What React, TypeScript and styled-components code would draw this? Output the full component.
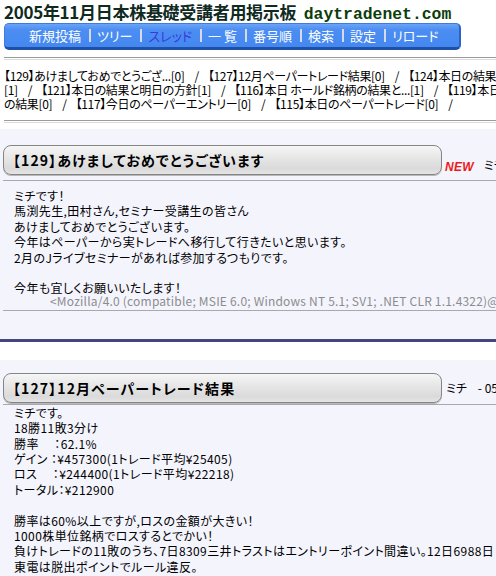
import React from "react";
import styled, { createGlobalStyle } from "styled-components";

// --- data ----------------------------------------

const navItems = [
  { label: "新規投稿" },
  { label: "ツリー" },
  { label: "スレッド", current: true },
  { label: "一 覧" },
  { label: "番号順" },
  { label: "検索" },
  { label: "設定" },
  { label: "リロード" },
];

// thread index, already broken into the lines the page wraps to
const threadLines = [
  ["【129】あけましておめでとうござ...[0]", "【127】12月ペーパートレード結果[0]", "【124】本日の結果"],
  ["[1]", "【121】本日の結果と明日の方針[1]", "【116】本日 ホールド銘柄の結果と...[1]", "【119】本日"],
  ["の結果[0]", "【117】今日のペーパーエントリー[0]", "【115】本日のペーパートレード[0]", ""],
];

const posts = [
  {
    title: "【129】あけましておめでとうございます",
    isNew: true,
    author: "ミチ",
    date: "- 06/01/02(月) 21:40",
    body: [
      "ミチです！",
      "馬渕先生,田村さん,セミナー受講生の皆さん",
      "あけましておめでとうございます。",
      "今年はペーパーから実トレードへ移行して行きたいと思います。",
      "2月のJライブセミナーがあれば参加するつもりです。",
      "",
      "今年も宜しくお願いいたします！",
    ],
    agent:
      "<Mozilla/4.0 (compatible; MSIE 6.0; Windows NT 5.1; SV1; .NET CLR 1.1.4322)@",
  },
  {
    title: "【127】12月ペーパートレード結果",
    isNew: false,
    author: "ミチ",
    date: "- 05/12/31(土) 18:12",
    body: [
      "ミチです。",
      "18勝11敗3分け",
      "勝率　 ：62.1%",
      "ゲイン ：¥457300(1トレード平均¥25405)",
      "ロス　 ：¥244400(1トレード平均¥22218)",
      "トータル：¥212900",
      "",
      "勝率は60%以上ですが,ロスの金額が大きい！",
      "1000株単位銘柄でロスするとでかい！",
      "負けトレードの11敗のうち、7日8309三井トラストはエントリーポイント間違い。12日6988日",
      "東電は脱出ポイントでルール違反。",
    ],
    agent: "",
  },
];

// --- component ----------------------------------------

export default function App() {
  return (
    <Page>
      <GlobalStyle />
      <Header>
        <Title>
          2005年11月日本株基礎受講者用掲示板 <Domain>daytradenet.com</Domain>
        </Title>
        <NavBar>
          {navItems.map((item, i) => (
            <React.Fragment key={item.label}>
              {i > 0 && <NavSep />}
              <NavLink $current={item.current}>{item.label}</NavLink>
            </React.Fragment>
          ))}
        </NavBar>
      </Header>
      <Rule $gap={7} />
      <ThreadList>
        {threadLines.map((line, i) => (
          <ThreadLine key={i}>
            {line.map((entry, j) => (
              <React.Fragment key={j}>
                {j > 0 && <Slash>/</Slash>}
                {entry}
              </React.Fragment>
            ))}
          </ThreadLine>
        ))}
      </ThreadList>
      <Rule $gap={9} />

      {posts.map((post, i) => (
        <React.Fragment key={post.title}>
          <Post $first={i === 0}>
            <PostHead $tall={post.isNew}>
              <TitleBox>{post.title}</TitleBox>
              {post.isNew && <NewMark>NEW</NewMark>}
              <Author $tall={post.isNew}>
                {post.author}
                <PostDate>{post.date}</PostDate>
              </Author>
            </PostHead>
            <Divider />
            <PostBody $compact={!post.isNew}>
              {post.body.map((line, j) =>
                line ? <BodyLine key={j}>{line}</BodyLine> : <BodyGap key={j} />
              )}
              {post.agent && <Agent>{post.agent}</Agent>}
            </PostBody>
            {post.agent && (
              <>
                <Divider />
                <PostFoot />
              </>
            )}
          </Post>
          {i === 0 && <NavyRule />}
        </React.Fragment>
      ))}
    </Page>
  );
}

// styled

const GlobalStyle = createGlobalStyle`
  html, body {
    margin: 0;
    padding: 0;
    background: #fff;
    overflow: hidden;
  }
  body {
    font-family: "Noto Sans CJK JP", "Liberation Sans", sans-serif;
    color: #000;
  }
`;

const Page = styled.div`
  width: 600px;
`;

const Header = styled.div`
  padding: 0 0 0 4px;
`;

const Title = styled.h1`
  margin: 0;
  height: 23px;
  font-size: 17px;
  line-height: 23px;
  font-weight: bold;
  color: #0f2a1f;
  white-space: nowrap;
  letter-spacing: -0.3px;
`;

const Domain = styled.span`
  margin-left: 4px;
  font-family: "Liberation Mono", monospace;
  font-size: 16.4px;
  font-weight: bold;
  color: #0b3d0b;
  letter-spacing: 0;
`;

const NavBar = styled.nav`
  box-sizing: border-box;
  width: 457px;
  height: 27px;
  display: flex;
  align-items: center;
  padding-left: 24px;
  background: linear-gradient(#6aa4f7, #4c8ef2 25%, #4387f0);
  border: 1px solid #3d7be0;
  border-bottom: 3px solid #1f4fa6;
  border-right: 2px solid #2b62c4;
  border-radius: 5px;
`;

const NavLink = styled.span<{ $current?: boolean }>`
  flex: none;
  font-size: 13px;
  line-height: 16px;
  letter-spacing: 0;
  font-feature-settings: "palt";
  color: ${(p) => (p.$current ? "#3a3ad8" : "#ffffff")};
  white-space: nowrap;
`;

const NavSep = styled.span`
  flex: none;
  width: 2px;
  height: 13px;
  margin: 0 6px 0 8px;
  background: #d6d9e6;
`;

const Rule = styled.div<{ $gap: number }>`
  margin: ${(p) => p.$gap}px 0 0 4px;
  height: 1px;
  border-top: 1px solid #9c9c9c;
  border-bottom: 1px solid #dcdcdc;
`;

const ThreadList = styled.div`
  padding: 9px 0 0 4px;
  font-size: 12px;
  line-height: 14px;
  letter-spacing: -0.35px;
  font-feature-settings: "palt";
`;

const ThreadLine = styled.div`
  white-space: nowrap;
`;

const Slash = styled.span`
  margin: 0 9px 0 10px;
`;

const Post = styled.section<{ $first: boolean }>`
  margin-top: ${(p) => (p.$first ? 6 : 18)}px;
  background: #f4f4fd;
`;

const PostHead = styled.div<{ $tall?: boolean }>`
  display: flex;
  align-items: flex-end;
  padding: ${(p) => (p.$tall ? "16px 0 5px 3px" : "13px 0 1px 3px")};
`;

const TitleBox = styled.div`
  box-sizing: border-box;
  flex: none;
  width: 439px;
  height: 30px;
  display: flex;
  align-items: center;
  padding-left: 9px;
  border: 1px solid #858585;
  border-radius: 8px;
  background: linear-gradient(#f6f6f6, #e9e9e9 35%, #dadada 80%, #e4e4e4);
  box-shadow: 0 1px 0 #b8b8b8;
  font-size: 14px;
  font-weight: bold;
  letter-spacing: 1.1px;
  font-feature-settings: "palt";
  white-space: nowrap;
`;

const NewMark = styled.span`
  flex: none;
  margin: 0 0 1px 3px;
  font-family: "Liberation Sans", sans-serif;
  font-size: 12px;
  font-weight: bold;
  font-style: italic;
  color: #ee1a1a;
  letter-spacing: 0.3px;
`;

const Author = styled.span<{ $tall?: boolean }>`
  flex: none;
  align-self: ${(p) => (p.$tall ? "flex-end" : "center")};
  margin: ${(p) => (p.$tall ? "0 0 2px 10px" : "0 0 0 4px")};
  font-size: 12px;
  white-space: nowrap;
  font-feature-settings: "palt";
`;

const PostDate = styled.span`
  margin-left: 11px;
`;

const Divider = styled.div`
  height: 1px;
  margin-left: 3px;
  background: #a8a8b0;
`;

const PostBody = styled.div<{ $compact: boolean }>`
  padding: ${(p) => (p.$compact ? "0 0 6px 14px" : "7px 0 3px 14px")};
  font-size: 12px;
  line-height: 15.4px;
  letter-spacing: 0.4px;
  font-feature-settings: "palt";
`;

const BodyLine = styled.div`
  white-space: nowrap;
`;

const BodyGap = styled.div`
  height: 15.4px;
`;

const Agent = styled.div`
  margin-top: -2px;
  padding-left: 36px;
  font-size: 12px;
  line-height: 13px;
  letter-spacing: 0.2px;
  color: #8c8c8c;
  white-space: nowrap;
`;

const PostFoot = styled.div`
  height: 28px;
`;

const NavyRule = styled.div`
  height: 3px;
  background: #46467e;
`;
